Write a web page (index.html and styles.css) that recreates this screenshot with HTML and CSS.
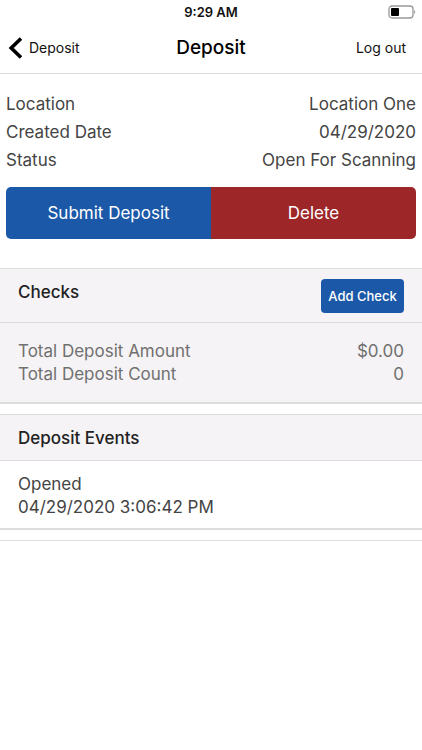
FILE: index.html
```
<!DOCTYPE html>
<html lang="en">
<head>
<meta charset="utf-8">
<meta name="viewport" content="width=device-width, initial-scale=1">
<title>Deposit</title>
<link rel="stylesheet" href="styles.css">
</head>
<body>
<div class="status-bar">
	<span></span>
	<span class="time">9:29 AM</span>
	<svg class="battery" width="28" height="14" viewBox="0 0 28 14">
		<rect x="1" y="1" width="24" height="12" rx="3" fill="#fff" stroke="#999" stroke-width="1.3"/>
		<rect x="3" y="3" width="8" height="8" rx="1" fill="#000"/>
		<path d="M26.2 5v4c1.4-.6 1.4-3.400 0-4z" fill="#999"/>
	</svg>
</div>
<header class="nav">
	<a class="back" href="#">
		<svg width="14" height="22" viewBox="0 0 14 22"><path d="M13 1.500L3.200 11l9.800 9.500" fill="none" stroke="#000" stroke-width="3.600"/></svg>
		Deposit
	</a>
	<h1>Deposit</h1>
	<a class="logout" href="#">Log out</a>
</header>
<main>
	<dl class="details">
		<div><dt>Location</dt><dd>Location One</dd></div>
		<div><dt>Created Date</dt><dd>04/29/2020</dd></div>
		<div><dt>Status</dt><dd>Open For Scanning</dd></div>
	</dl>
	<div class="actions">
		<button type="button" class="submit">Submit Deposit</button>
		<button type="button" class="delete">Delete</button>
	</div>
	<section class="card checks">
		<div class="card-head">
			<h2>Checks</h2>
			<button type="button" class="add">Add Check</button>
		</div>
		<dl class="totals">
			<div><dt>Total Deposit Amount</dt><dd>$0.00</dd></div>
			<div><dt>Total Deposit Count</dt><dd>0</dd></div>
		</dl>
	</section>
	<section class="card events">
		<div class="card-head">
			<h2>Deposit Events</h2>
		</div>
		<div class="event">
			<p>Opened</p>
			<p>04/29/2020 3:06:42 PM</p>
		</div>
	</section>
	<hr class="end">
</main>
</body>
</html>
```
FILE: styles.css
```
*{ margin:0; padding:0; box-sizing:border-box;}
body{ background:#fff; color:#444; font-family:Inter, "Liberation Sans", sans-serif; font-size:17px;}
a{ color:#111; text-decoration:none;}
button{ border:0; color:#fff; font-family:inherit; cursor:pointer;}

.status-bar{ display:grid; grid-template-columns:1fr auto 1fr; align-items:center; height:24px; padding:0 6px;}
.time{ color:#111; font-size:13px; font-weight:600;}
.battery{ justify-self:end;}

.nav{ display:grid; grid-template-columns:1fr auto 1fr; align-items:center; height:50px; padding:0 8px 2px; border-bottom:1px solid #ddd; font-size:14px;}
.nav h1{ color:#000; font-size:19px; font-weight:500;}
.back{ display:flex; align-items:center; gap:7px;}
.logout{ justify-self:end; padding-right:8px;}

.details{ padding:16px 6px 13px;}
.details div, .totals div{ display:flex; justify-content:space-between;}
.details div{ line-height:28px;}

.actions{ display:flex; margin:0 6px 29px; border-radius:5px; overflow:hidden;}
.actions button{ flex:1; height:52px; font-size:17px;}
.actions .submit, .add{ background:#1b59a8;}
.actions .delete{ background:#9d2629;}

.card{ margin-bottom:10px; border-top:1px solid #ddd; border-bottom:2px solid #ddd;}
.card-head{ display:flex; justify-content:space-between; padding:10px 18px 9px; background:#f5f3f5; border-bottom:1px solid #ddd;}
.card-head h2{ color:#222; font-size:17px; font-weight:500; line-height:26px;}
.add{ width:83px; height:34px; border-radius:4px; font-size:13px; font-weight:500;}
.totals{ padding:17px 18px 16px; background:#f5f3f5; color:#707070; line-height:23px;}
.event{ padding:12px 18px 9px; line-height:23px;}
.end{ border:0; border-top:1px solid #ddd;}
```
